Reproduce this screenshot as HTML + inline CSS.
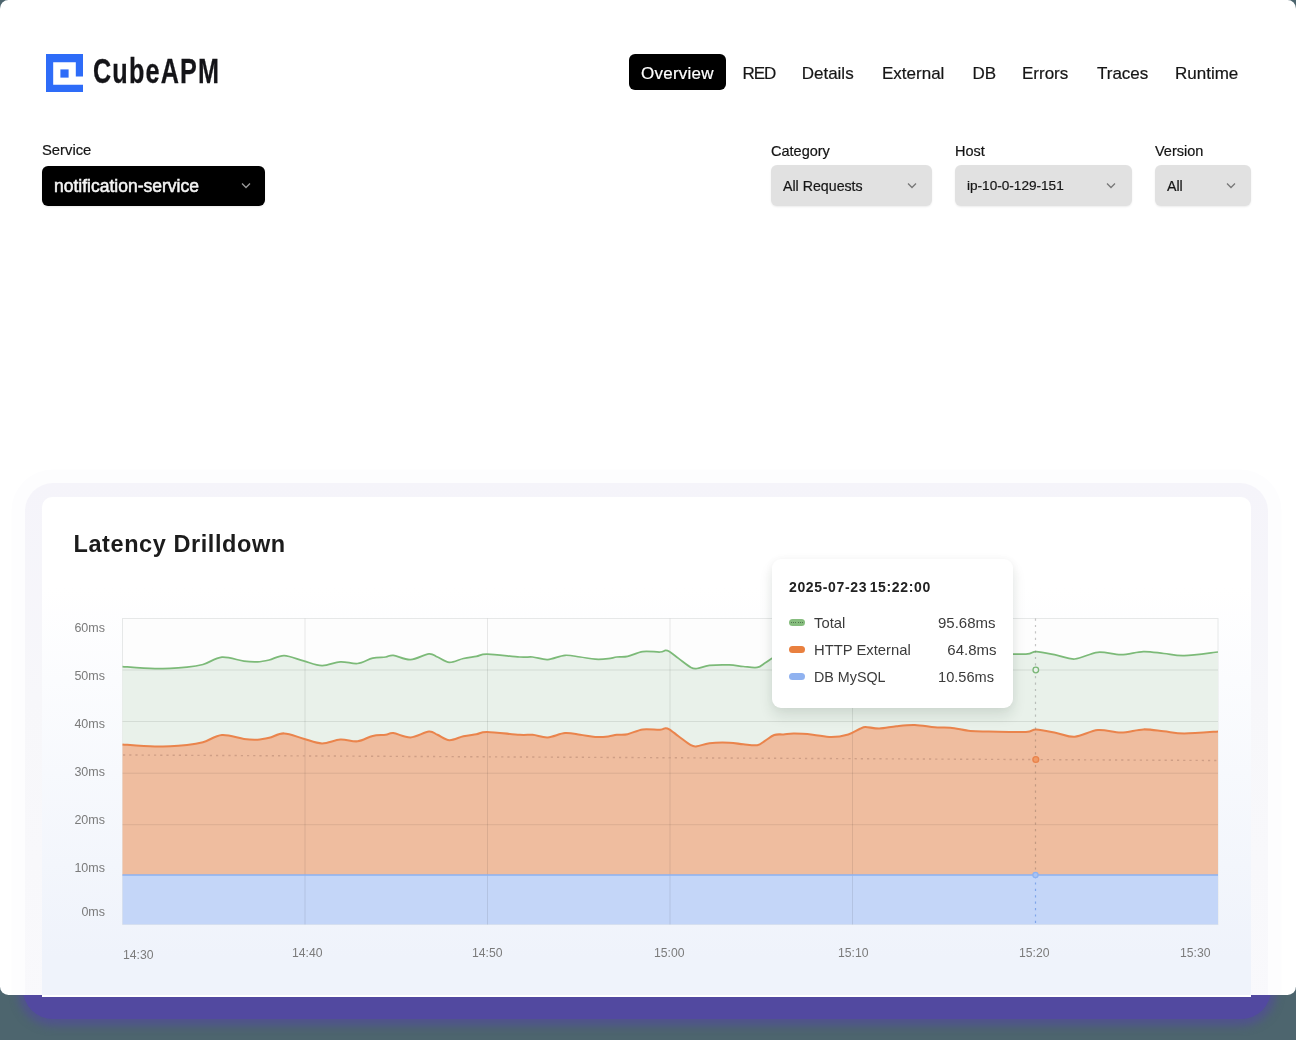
<!DOCTYPE html>
<html><head><meta charset="utf-8">
<style>
*{box-sizing:border-box;margin:0;padding:0}
html,body{width:1296px;height:1040px;overflow:hidden;will-change:transform;background:#4d656e;font-family:"Liberation Sans",sans-serif;color:#161616}
.abs{position:absolute}
#glow{position:absolute;left:23px;top:940px;width:1248px;height:79px;background:#5249a0;border-radius:30px;box-shadow:0 2px 9px 5px rgba(82,73,160,.62)}
#page{position:absolute;left:0;top:0;width:1296px;height:995px;background:#fff;border-radius:8.5px;overflow:hidden}
#logo{position:absolute;left:45.5px;top:54px;width:37px;height:38px}
#brand{position:absolute;left:93px;top:52px;font-weight:700;font-size:34.5px;letter-spacing:1.6px;transform:scaleX(.73);transform-origin:0 0;color:#141418;-webkit-text-stroke:.3px #141418;white-space:nowrap}
.nav{position:absolute;top:62px;font-size:17px;line-height:24px;color:#161616;white-space:nowrap;-webkit-text-stroke:.2px currentColor}
#ov{position:absolute;left:629px;top:54px;width:97px;height:36px;background:#000;border-radius:6px}
.lbl{position:absolute;top:142px;font-size:14.5px;line-height:18px;color:#141414;white-space:nowrap;-webkit-text-stroke:.2px currentColor}
.sel{position:absolute;top:165px;height:41px;border-radius:6px;background:#e1e1e1;box-shadow:0 1px 2px rgba(0,0,0,.08)}
.selt{position:absolute;top:177px;font-size:14.2px;line-height:18px;color:#161616;white-space:nowrap;-webkit-text-stroke:.2px currentColor}
.chev{position:absolute;top:182px;width:10px;height:7px}
#halo{position:absolute;left:25px;top:483px;width:1243px;height:540px;border-radius:28px;background:linear-gradient(#f5f4fa,#f7f7fa 40%,#f9f9fc);box-shadow:0 0 0 13.5px #fdfdfe}
#card{position:absolute;left:42px;top:497px;width:1209px;height:500px;border-radius:10px 10px 0 0;background:linear-gradient(#fff 0px,#fff 90px,#eff3fb 460px);border-bottom:2.5px solid #fff}
.yl{position:absolute;font-size:12.5px;line-height:14px;color:#7b7b7b;text-align:right;width:60px;left:45px}
.xl{position:absolute;margin-top:.5px;font-size:12.2px;line-height:14px;color:#7b7b7b;white-space:nowrap}
#tt{position:absolute;left:772px;top:559px;width:241px;height:149px;background:#fff;border-radius:9px;box-shadow:0 8px 14px rgba(20,45,30,.11),0 0 8px rgba(0,0,0,.04)}
.tl{position:absolute;margin-top:.7px;font-size:14.8px;line-height:18px;color:#3b3b3b;white-space:nowrap}
.tv{position:absolute;margin-top:.7px;font-size:14.5px;line-height:18px;color:#3b3b3b;white-space:nowrap;text-align:right;width:100px}
.sw{position:absolute;left:789px;width:16px;height:7px;border-radius:4px}
</style></head><body>
<div id="glow"></div>
<div id="page">
  <svg id="logo" viewBox="0 0 36 37" width="37" height="38" preserveAspectRatio="none"><path fill="#2e6cf8" d="M0 0H36V22H29V8H7V30H36V37H0Z"/><rect x="14" y="15" width="8" height="8" fill="#2e6cf8"/></svg>
  <div id="brand">CubeAPM</div>
  <div id="ov"></div>
  <div class="nav" style="left:641px;color:#fff;letter-spacing:.25px">Overview</div>
  <div class="nav" style="left:742.5px;letter-spacing:-1.1px">RED</div>
  <div class="nav" style="left:801.7px">Details</div>
  <div class="nav" style="left:882px">External</div>
  <div class="nav" style="left:972.5px">DB</div>
  <div class="nav" style="left:1022px">Errors</div>
  <div class="nav" style="left:1097px">Traces</div>
  <div class="nav" style="left:1175px">Runtime</div>

  <div class="lbl" style="left:42px;top:141px;font-size:14.8px">Service</div>
  <div class="sel" style="left:42px;top:166px;width:223px;height:40px;background:#000"></div>
  <div class="selt" style="left:54px;top:176.6px;font-weight:400;font-size:17.5px;color:#f4f4f4;-webkit-text-stroke:.55px #f4f4f4">notification-service</div>
  <svg class="chev" style="left:241px" viewBox="0 0 10 7"><path d="M1 1.5L5 5.5L9 1.5" fill="none" stroke="#9a9a9a" stroke-width="1.3"/></svg>

  <div class="lbl" style="left:771px">Category</div>
  <div class="sel" style="left:771px;width:161px"></div>
  <div class="selt" style="left:783px">All Requests</div>
  <svg class="chev" style="left:907px" viewBox="0 0 10 7"><path d="M1 1.5L5 5.5L9 1.5" fill="none" stroke="#777" stroke-width="1.3"/></svg>

  <div class="lbl" style="left:955px">Host</div>
  <div class="sel" style="left:955px;width:177px"></div>
  <div class="selt" style="left:967px;font-size:13.6px">ip-10-0-129-151</div>
  <svg class="chev" style="left:1106px" viewBox="0 0 10 7"><path d="M1 1.5L5 5.5L9 1.5" fill="none" stroke="#777" stroke-width="1.3"/></svg>

  <div class="lbl" style="left:1155px">Version</div>
  <div class="sel" style="left:1155px;width:96px"></div>
  <div class="selt" style="left:1167px">All</div>
  <svg class="chev" style="left:1226px" viewBox="0 0 10 7"><path d="M1 1.5L5 5.5L9 1.5" fill="none" stroke="#777" stroke-width="1.3"/></svg>

  <div id="halo"></div>
</div>
<div id="card"></div>
<div class="abs" style="left:73.5px;top:529.5px;font-size:23.5px;font-weight:700;letter-spacing:.58px;line-height:28px;color:#1c1c1c;white-space:nowrap">Latency Drilldown</div>

<div class="yl" style="top:621px">60ms</div>
<div class="yl" style="top:669px">50ms</div>
<div class="yl" style="top:717px">40ms</div>
<div class="yl" style="top:765px">30ms</div>
<div class="yl" style="top:813px">20ms</div>
<div class="yl" style="top:861px">10ms</div>
<div class="yl" style="top:905px">0ms</div>

<svg class="abs" style="left:0;top:0" width="1296" height="1040" viewBox="0 0 1296 1040">
  <rect x="122.5" y="618.5" width="1095.5" height="306" fill="#fdfdfd" stroke="#e6e8e8" stroke-width="1"/>
  <path d="M122.5,666.6 C127.9,667.0 144.2,668.6 155.0,668.7 C165.8,668.8 179.0,667.8 187.0,667.1 C195.0,666.4 197.2,666.1 203.0,664.5 C208.8,662.9 215.2,657.8 222.0,657.2 C228.8,656.7 238.1,660.4 244.0,661.2 C249.9,662.0 253.3,662.1 257.5,661.9 C261.7,661.7 264.8,661.0 269.2,660.0 C273.6,659.0 278.4,655.5 284.1,655.6 C289.8,655.8 297.3,659.2 303.6,660.9 C309.9,662.6 315.9,665.5 322.0,665.6 C328.1,665.8 334.4,662.1 340.3,661.8 C346.2,661.4 352.2,664.1 357.6,663.5 C363.0,662.9 368.0,659.2 372.7,658.1 C377.4,657.0 382.3,657.5 385.7,657.0 C389.1,656.5 389.2,654.9 393.3,655.3 C397.4,655.7 404.6,659.9 410.5,659.6 C416.4,659.4 424.4,654.2 428.9,653.8 C433.4,653.4 434.1,655.6 437.5,657.0 C440.9,658.4 445.1,662.1 449.4,662.4 C453.7,662.6 458.9,659.5 463.4,658.5 C467.9,657.5 472.4,657.1 476.4,656.4 C480.4,655.7 480.0,654.1 487.2,654.2 C494.4,654.3 512.0,656.5 519.6,657.0 C527.2,657.5 527.9,656.6 532.6,657.0 C537.3,657.4 542.3,659.9 547.7,659.6 C553.1,659.3 559.6,655.7 565.0,655.3 C570.4,654.9 575.1,656.4 580.1,657.0 C585.1,657.6 590.5,658.9 595.2,659.2 C599.9,659.5 604.6,659.1 608.2,658.7 C611.8,658.3 613.6,657.4 616.8,657.0 C620.0,656.6 623.3,657.3 627.6,656.4 C631.9,655.5 637.4,652.3 642.8,651.6 C648.2,650.9 656.2,652.2 660.0,652.0 C663.8,651.8 663.9,650.5 665.4,650.4 C666.9,650.3 667.1,650.2 669.3,651.5 C671.5,652.8 674.9,655.8 678.5,658.4 C682.1,661.0 687.8,665.7 690.9,667.4 C694.0,669.1 693.9,668.8 697.0,668.5 C700.1,668.2 704.0,666.0 709.4,665.4 C714.8,664.8 723.8,664.7 729.4,664.9 C735.0,665.1 738.7,666.1 743.3,666.5 C747.9,666.9 753.6,668.0 757.2,667.4 C760.8,666.8 762.1,664.8 764.9,663.1 C767.7,661.4 771.1,658.3 774.2,657.2 C777.3,656.1 780.1,656.8 783.5,656.6 C786.9,656.4 789.4,655.8 794.3,655.8 C799.2,655.8 806.6,656.3 812.8,656.9 C819.0,657.5 825.4,659.2 831.3,659.2 C837.2,659.2 843.5,658.0 848.3,656.6 C853.1,655.2 857.1,652.2 860.0,651.0 C862.9,649.8 862.2,649.2 865.4,649.2 C868.6,649.2 874.1,650.8 879.3,650.7 C884.4,650.6 890.4,649.0 896.3,648.4 C902.2,647.8 908.4,647.0 914.8,647.2 C921.2,647.4 929.0,649.0 934.9,649.5 C940.8,650.0 944.4,649.3 950.3,649.9 C956.2,650.5 964.0,652.6 970.4,653.3 C976.8,653.9 979.6,653.7 988.9,653.8 C998.1,653.9 1018.0,654.5 1025.9,654.1 C1033.8,653.8 1031.1,651.5 1036.2,651.7 C1041.3,651.9 1050.0,653.9 1056.4,655.1 C1062.8,656.3 1067.9,659.5 1074.8,659.0 C1081.7,658.5 1090.2,653.0 1097.9,652.3 C1105.6,651.6 1113.4,654.8 1121.0,654.7 C1128.6,654.6 1136.3,651.8 1143.4,651.6 C1150.5,651.4 1157.0,652.8 1163.8,653.5 C1170.6,654.2 1175.3,656.0 1184.3,655.7 C1193.3,655.5 1212.4,652.6 1218.0,652.0 L1218.0,731.4 C1212.4,731.8 1193.3,733.5 1184.3,733.5 C1175.3,733.5 1170.6,732.0 1163.8,731.3 C1157.0,730.6 1150.5,729.2 1143.4,729.4 C1136.3,729.6 1128.6,732.4 1121.0,732.5 C1113.4,732.6 1105.6,729.4 1097.9,730.1 C1090.2,730.8 1081.7,736.3 1074.8,736.8 C1067.9,737.3 1062.8,734.1 1056.4,732.9 C1050.0,731.7 1041.3,729.7 1036.2,729.5 C1031.1,729.3 1033.8,731.5 1025.9,731.9 C1018.0,732.2 998.1,731.7 988.9,731.6 C979.6,731.5 976.8,731.7 970.4,731.1 C964.0,730.4 956.2,728.3 950.3,727.7 C944.4,727.1 940.8,727.8 934.9,727.3 C929.0,726.8 921.2,725.2 914.8,725.0 C908.4,724.8 902.2,725.6 896.3,726.2 C890.4,726.8 884.4,728.4 879.3,728.5 C874.1,728.6 868.6,727.0 865.4,727.0 C862.2,727.0 862.9,727.6 860.0,728.8 C857.1,730.0 853.1,733.0 848.3,734.4 C843.5,735.8 837.2,737.0 831.3,737.0 C825.4,737.0 819.0,735.3 812.8,734.7 C806.6,734.1 799.2,733.6 794.3,733.6 C789.4,733.5 786.9,734.2 783.5,734.4 C780.1,734.6 777.3,733.9 774.2,735.0 C771.1,736.1 767.7,739.2 764.9,740.9 C762.1,742.6 760.8,744.6 757.2,745.2 C753.6,745.8 747.9,744.7 743.3,744.3 C738.7,743.9 735.0,742.9 729.4,742.7 C723.8,742.5 714.8,742.6 709.4,743.2 C704.0,743.8 700.1,746.0 697.0,746.3 C693.9,746.6 694.0,746.9 690.9,745.2 C687.8,743.5 682.1,738.8 678.5,736.2 C674.9,733.5 671.5,730.6 669.3,729.3 C667.1,728.0 666.9,728.1 665.4,728.2 C663.9,728.3 663.8,729.6 660.0,729.8 C656.2,730.0 648.2,728.7 642.8,729.4 C637.4,730.1 631.9,733.3 627.6,734.2 C623.3,735.1 620.0,734.4 616.8,734.8 C613.6,735.2 611.8,736.1 608.2,736.5 C604.6,736.9 599.9,737.3 595.2,737.0 C590.5,736.7 585.1,735.4 580.1,734.8 C575.1,734.1 570.4,732.7 565.0,733.1 C559.6,733.5 553.1,737.1 547.7,737.4 C542.3,737.7 537.3,735.2 532.6,734.8 C527.9,734.4 527.2,735.3 519.6,734.8 C512.0,734.3 494.4,732.1 487.2,732.0 C480.0,731.9 480.4,733.5 476.4,734.2 C472.4,734.9 467.9,735.3 463.4,736.3 C458.9,737.3 453.7,740.4 449.4,740.2 C445.1,739.9 440.9,736.2 437.5,734.8 C434.1,733.4 433.4,731.2 428.9,731.6 C424.4,732.0 416.4,737.1 410.5,737.4 C404.6,737.6 397.4,733.5 393.3,733.1 C389.2,732.7 389.1,734.3 385.7,734.8 C382.3,735.3 377.4,734.8 372.7,735.9 C368.0,737.0 363.0,740.7 357.6,741.3 C352.2,741.9 346.2,739.2 340.3,739.6 C334.4,739.9 328.1,743.5 322.0,743.4 C315.9,743.2 309.9,740.4 303.6,738.7 C297.3,737.0 289.8,733.5 284.1,733.4 C278.4,733.2 273.6,736.8 269.2,737.8 C264.8,738.8 261.7,739.5 257.5,739.7 C253.3,739.9 249.9,739.8 244.0,739.0 C238.1,738.2 228.8,734.5 222.0,735.0 C215.2,735.5 208.8,740.6 203.0,742.3 C197.2,743.9 195.0,744.2 187.0,744.9 C179.0,745.6 165.8,746.6 155.0,746.5 C144.2,746.4 127.9,744.8 122.5,744.4 Z" fill="#e9f1ea"/>
  <path d="M122.5,744.4 C127.9,744.8 144.2,746.4 155.0,746.5 C165.8,746.6 179.0,745.6 187.0,744.9 C195.0,744.2 197.2,743.9 203.0,742.3 C208.8,740.6 215.2,735.5 222.0,735.0 C228.8,734.5 238.1,738.2 244.0,739.0 C249.9,739.8 253.3,739.9 257.5,739.7 C261.7,739.5 264.8,738.8 269.2,737.8 C273.6,736.8 278.4,733.2 284.1,733.4 C289.8,733.5 297.3,737.0 303.6,738.7 C309.9,740.4 315.9,743.2 322.0,743.4 C328.1,743.5 334.4,739.9 340.3,739.6 C346.2,739.2 352.2,741.9 357.6,741.3 C363.0,740.7 368.0,737.0 372.7,735.9 C377.4,734.8 382.3,735.3 385.7,734.8 C389.1,734.3 389.2,732.7 393.3,733.1 C397.4,733.5 404.6,737.6 410.5,737.4 C416.4,737.1 424.4,732.0 428.9,731.6 C433.4,731.2 434.1,733.4 437.5,734.8 C440.9,736.2 445.1,739.9 449.4,740.2 C453.7,740.4 458.9,737.3 463.4,736.3 C467.9,735.3 472.4,734.9 476.4,734.2 C480.4,733.5 480.0,731.9 487.2,732.0 C494.4,732.1 512.0,734.3 519.6,734.8 C527.2,735.3 527.9,734.4 532.6,734.8 C537.3,735.2 542.3,737.7 547.7,737.4 C553.1,737.1 559.6,733.5 565.0,733.1 C570.4,732.7 575.1,734.1 580.1,734.8 C585.1,735.4 590.5,736.7 595.2,737.0 C599.9,737.3 604.6,736.9 608.2,736.5 C611.8,736.1 613.6,735.2 616.8,734.8 C620.0,734.4 623.3,735.1 627.6,734.2 C631.9,733.3 637.4,730.1 642.8,729.4 C648.2,728.7 656.2,730.0 660.0,729.8 C663.8,729.6 663.9,728.3 665.4,728.2 C666.9,728.1 667.1,728.0 669.3,729.3 C671.5,730.6 674.9,733.5 678.5,736.2 C682.1,738.8 687.8,743.5 690.9,745.2 C694.0,746.9 693.9,746.6 697.0,746.3 C700.1,746.0 704.0,743.8 709.4,743.2 C714.8,742.6 723.8,742.5 729.4,742.7 C735.0,742.9 738.7,743.9 743.3,744.3 C747.9,744.7 753.6,745.8 757.2,745.2 C760.8,744.6 762.1,742.6 764.9,740.9 C767.7,739.2 771.1,736.1 774.2,735.0 C777.3,733.9 780.1,734.6 783.5,734.4 C786.9,734.2 789.4,733.5 794.3,733.6 C799.2,733.6 806.6,734.1 812.8,734.7 C819.0,735.3 825.4,737.0 831.3,737.0 C837.2,737.0 843.5,735.8 848.3,734.4 C853.1,733.0 857.1,730.0 860.0,728.8 C862.9,727.6 862.2,727.0 865.4,727.0 C868.6,727.0 874.1,728.6 879.3,728.5 C884.4,728.4 890.4,726.8 896.3,726.2 C902.2,725.6 908.4,724.8 914.8,725.0 C921.2,725.2 929.0,726.8 934.9,727.3 C940.8,727.8 944.4,727.1 950.3,727.7 C956.2,728.3 964.0,730.4 970.4,731.1 C976.8,731.7 979.6,731.5 988.9,731.6 C998.1,731.7 1018.0,732.2 1025.9,731.9 C1033.8,731.5 1031.1,729.3 1036.2,729.5 C1041.3,729.7 1050.0,731.7 1056.4,732.9 C1062.8,734.1 1067.9,737.3 1074.8,736.8 C1081.7,736.3 1090.2,730.8 1097.9,730.1 C1105.6,729.4 1113.4,732.6 1121.0,732.5 C1128.6,732.4 1136.3,729.6 1143.4,729.4 C1150.5,729.2 1157.0,730.6 1163.8,731.3 C1170.6,732.0 1175.3,733.5 1184.3,733.5 C1193.3,733.5 1212.4,731.8 1218.0,731.4 L1218,875.5 L122.5,875.5 Z" fill="#efbd9f"/>
  <rect x="122.5" y="875" width="1095.5" height="49.5" fill="#c4d6f8"/>
  <g stroke-width="1">
    <g stroke="rgba(0,0,0,0.085)">
      <line x1="122.5" y1="670" x2="1218" y2="670"/>
      <line x1="122.5" y1="721.5" x2="1218" y2="721.5"/>
      <line x1="122.5" y1="773.2" x2="1218" y2="773.2"/>
      <line x1="122.5" y1="824.7" x2="1218" y2="824.7"/>
      <line x1="305" y1="618.5" x2="305" y2="924.5"/>
      <line x1="487.5" y1="618.5" x2="487.5" y2="924.5"/>
      <line x1="670" y1="618.5" x2="670" y2="924.5"/>
      <line x1="852.5" y1="618.5" x2="852.5" y2="924.5"/>
    </g>
  </g>
  <path d="M122.5,666.6 C127.9,667.0 144.2,668.6 155.0,668.7 C165.8,668.8 179.0,667.8 187.0,667.1 C195.0,666.4 197.2,666.1 203.0,664.5 C208.8,662.9 215.2,657.8 222.0,657.2 C228.8,656.7 238.1,660.4 244.0,661.2 C249.9,662.0 253.3,662.1 257.5,661.9 C261.7,661.7 264.8,661.0 269.2,660.0 C273.6,659.0 278.4,655.5 284.1,655.6 C289.8,655.8 297.3,659.2 303.6,660.9 C309.9,662.6 315.9,665.5 322.0,665.6 C328.1,665.8 334.4,662.1 340.3,661.8 C346.2,661.4 352.2,664.1 357.6,663.5 C363.0,662.9 368.0,659.2 372.7,658.1 C377.4,657.0 382.3,657.5 385.7,657.0 C389.1,656.5 389.2,654.9 393.3,655.3 C397.4,655.7 404.6,659.9 410.5,659.6 C416.4,659.4 424.4,654.2 428.9,653.8 C433.4,653.4 434.1,655.6 437.5,657.0 C440.9,658.4 445.1,662.1 449.4,662.4 C453.7,662.6 458.9,659.5 463.4,658.5 C467.9,657.5 472.4,657.1 476.4,656.4 C480.4,655.7 480.0,654.1 487.2,654.2 C494.4,654.3 512.0,656.5 519.6,657.0 C527.2,657.5 527.9,656.6 532.6,657.0 C537.3,657.4 542.3,659.9 547.7,659.6 C553.1,659.3 559.6,655.7 565.0,655.3 C570.4,654.9 575.1,656.4 580.1,657.0 C585.1,657.6 590.5,658.9 595.2,659.2 C599.9,659.5 604.6,659.1 608.2,658.7 C611.8,658.3 613.6,657.4 616.8,657.0 C620.0,656.6 623.3,657.3 627.6,656.4 C631.9,655.5 637.4,652.3 642.8,651.6 C648.2,650.9 656.2,652.2 660.0,652.0 C663.8,651.8 663.9,650.5 665.4,650.4 C666.9,650.3 667.1,650.2 669.3,651.5 C671.5,652.8 674.9,655.8 678.5,658.4 C682.1,661.0 687.8,665.7 690.9,667.4 C694.0,669.1 693.9,668.8 697.0,668.5 C700.1,668.2 704.0,666.0 709.4,665.4 C714.8,664.8 723.8,664.7 729.4,664.9 C735.0,665.1 738.7,666.1 743.3,666.5 C747.9,666.9 753.6,668.0 757.2,667.4 C760.8,666.8 762.1,664.8 764.9,663.1 C767.7,661.4 771.1,658.3 774.2,657.2 C777.3,656.1 780.1,656.8 783.5,656.6 C786.9,656.4 789.4,655.8 794.3,655.8 C799.2,655.8 806.6,656.3 812.8,656.9 C819.0,657.5 825.4,659.2 831.3,659.2 C837.2,659.2 843.5,658.0 848.3,656.6 C853.1,655.2 857.1,652.2 860.0,651.0 C862.9,649.8 862.2,649.2 865.4,649.2 C868.6,649.2 874.1,650.8 879.3,650.7 C884.4,650.6 890.4,649.0 896.3,648.4 C902.2,647.8 908.4,647.0 914.8,647.2 C921.2,647.4 929.0,649.0 934.9,649.5 C940.8,650.0 944.4,649.3 950.3,649.9 C956.2,650.5 964.0,652.6 970.4,653.3 C976.8,653.9 979.6,653.7 988.9,653.8 C998.1,653.9 1018.0,654.5 1025.9,654.1 C1033.8,653.8 1031.1,651.5 1036.2,651.7 C1041.3,651.9 1050.0,653.9 1056.4,655.1 C1062.8,656.3 1067.9,659.5 1074.8,659.0 C1081.7,658.5 1090.2,653.0 1097.9,652.3 C1105.6,651.6 1113.4,654.8 1121.0,654.7 C1128.6,654.6 1136.3,651.8 1143.4,651.6 C1150.5,651.4 1157.0,652.8 1163.8,653.5 C1170.6,654.2 1175.3,656.0 1184.3,655.7 C1193.3,655.5 1212.4,652.6 1218.0,652.0" fill="none" stroke="#7cba78" stroke-width="1.75"/>
  <path d="M122.5,744.4 C127.9,744.8 144.2,746.4 155.0,746.5 C165.8,746.6 179.0,745.6 187.0,744.9 C195.0,744.2 197.2,743.9 203.0,742.3 C208.8,740.6 215.2,735.5 222.0,735.0 C228.8,734.5 238.1,738.2 244.0,739.0 C249.9,739.8 253.3,739.9 257.5,739.7 C261.7,739.5 264.8,738.8 269.2,737.8 C273.6,736.8 278.4,733.2 284.1,733.4 C289.8,733.5 297.3,737.0 303.6,738.7 C309.9,740.4 315.9,743.2 322.0,743.4 C328.1,743.5 334.4,739.9 340.3,739.6 C346.2,739.2 352.2,741.9 357.6,741.3 C363.0,740.7 368.0,737.0 372.7,735.9 C377.4,734.8 382.3,735.3 385.7,734.8 C389.1,734.3 389.2,732.7 393.3,733.1 C397.4,733.5 404.6,737.6 410.5,737.4 C416.4,737.1 424.4,732.0 428.9,731.6 C433.4,731.2 434.1,733.4 437.5,734.8 C440.9,736.2 445.1,739.9 449.4,740.2 C453.7,740.4 458.9,737.3 463.4,736.3 C467.9,735.3 472.4,734.9 476.4,734.2 C480.4,733.5 480.0,731.9 487.2,732.0 C494.4,732.1 512.0,734.3 519.6,734.8 C527.2,735.3 527.9,734.4 532.6,734.8 C537.3,735.2 542.3,737.7 547.7,737.4 C553.1,737.1 559.6,733.5 565.0,733.1 C570.4,732.7 575.1,734.1 580.1,734.8 C585.1,735.4 590.5,736.7 595.2,737.0 C599.9,737.3 604.6,736.9 608.2,736.5 C611.8,736.1 613.6,735.2 616.8,734.8 C620.0,734.4 623.3,735.1 627.6,734.2 C631.9,733.3 637.4,730.1 642.8,729.4 C648.2,728.7 656.2,730.0 660.0,729.8 C663.8,729.6 663.9,728.3 665.4,728.2 C666.9,728.1 667.1,728.0 669.3,729.3 C671.5,730.6 674.9,733.5 678.5,736.2 C682.1,738.8 687.8,743.5 690.9,745.2 C694.0,746.9 693.9,746.6 697.0,746.3 C700.1,746.0 704.0,743.8 709.4,743.2 C714.8,742.6 723.8,742.5 729.4,742.7 C735.0,742.9 738.7,743.9 743.3,744.3 C747.9,744.7 753.6,745.8 757.2,745.2 C760.8,744.6 762.1,742.6 764.9,740.9 C767.7,739.2 771.1,736.1 774.2,735.0 C777.3,733.9 780.1,734.6 783.5,734.4 C786.9,734.2 789.4,733.5 794.3,733.6 C799.2,733.6 806.6,734.1 812.8,734.7 C819.0,735.3 825.4,737.0 831.3,737.0 C837.2,737.0 843.5,735.8 848.3,734.4 C853.1,733.0 857.1,730.0 860.0,728.8 C862.9,727.6 862.2,727.0 865.4,727.0 C868.6,727.0 874.1,728.6 879.3,728.5 C884.4,728.4 890.4,726.8 896.3,726.2 C902.2,725.6 908.4,724.8 914.8,725.0 C921.2,725.2 929.0,726.8 934.9,727.3 C940.8,727.8 944.4,727.1 950.3,727.7 C956.2,728.3 964.0,730.4 970.4,731.1 C976.8,731.7 979.6,731.5 988.9,731.6 C998.1,731.7 1018.0,732.2 1025.9,731.9 C1033.8,731.5 1031.1,729.3 1036.2,729.5 C1041.3,729.7 1050.0,731.7 1056.4,732.9 C1062.8,734.1 1067.9,737.3 1074.8,736.8 C1081.7,736.3 1090.2,730.8 1097.9,730.1 C1105.6,729.4 1113.4,732.6 1121.0,732.5 C1128.6,732.4 1136.3,729.6 1143.4,729.4 C1150.5,729.2 1157.0,730.6 1163.8,731.3 C1170.6,732.0 1175.3,733.5 1184.3,733.5 C1193.3,733.5 1212.4,731.8 1218.0,731.4" fill="none" stroke="#ea844c" stroke-width="2.05"/>
  <line x1="122.5" y1="875" x2="1218" y2="875" stroke="#8db2f2" stroke-width="1.6"/>
  <line x1="123" y1="755" x2="1218" y2="760.5" stroke="#cf9f86" stroke-width="1.4" stroke-dasharray="2.2 4"/>
  <line x1="1035.5" y1="618.5" x2="1035.5" y2="733" stroke="rgba(120,120,120,.42)" stroke-width="1.2" stroke-dasharray="2.2 4.2"/><line x1="1035.5" y1="733" x2="1035.5" y2="875" stroke="rgba(140,110,95,.45)" stroke-width="1.2" stroke-dasharray="2.2 4.2"/><line x1="1035.5" y1="876" x2="1035.5" y2="924" stroke="#7fa5ea" stroke-width="1.2" stroke-dasharray="2.2 4.2"/>
  <circle cx="1035.8" cy="670" r="2.8" fill="#e9f1ea" stroke="#79b676" stroke-width="1.3"/>
  <circle cx="1035.8" cy="759.5" r="2.9" fill="#f09a66" stroke="#e9834b" stroke-width="1.4"/>
  <circle cx="1035.5" cy="875" r="2.6" fill="#a9c3f3" stroke="#8db2f2" stroke-width="1.2"/>
</svg>

<div class="xl" style="left:123px;top:947px">14:30</div>
<div class="xl" style="left:292px;top:945px">14:40</div>
<div class="xl" style="left:472px;top:945px">14:50</div>
<div class="xl" style="left:654px;top:945px">15:00</div>
<div class="xl" style="left:838px;top:945px">15:10</div>
<div class="xl" style="left:1019px;top:945px">15:20</div>
<div class="xl" style="left:1180px;top:945px">15:30</div>

<div id="tt"></div>
<div class="abs" style="left:789px;top:578px;font-size:14px;font-weight:700;letter-spacing:.65px;word-spacing:-2px;line-height:18px;color:#222;white-space:nowrap">2025-07-23 15:22:00</div>
<div class="sw" style="top:619px;background:#86bd7e"><div style="position:absolute;left:2px;right:2px;top:2.5px;height:1px;background:repeating-linear-gradient(90deg,rgba(40,60,40,.55) 0 1px,transparent 1px 2.2px)"></div></div>
<div class="sw" style="top:646px;background:#e9803f"></div>
<div class="sw" style="top:673px;background:#90b2f0"></div>
<div class="tl" style="left:814px;top:613px">Total</div>
<div class="tl" style="left:814px;top:640px">HTTP External</div>
<div class="tl" style="left:814px;top:667px;font-size:14.3px">DB MySQL</div>
<div class="tv" style="left:895.5px;top:613px;font-size:15px">95.68ms</div>
<div class="tv" style="left:896.5px;top:640px;font-size:15px">64.8ms</div>
<div class="tv" style="left:894px;top:667px;font-size:14.6px">10.56ms</div>
</body></html>
